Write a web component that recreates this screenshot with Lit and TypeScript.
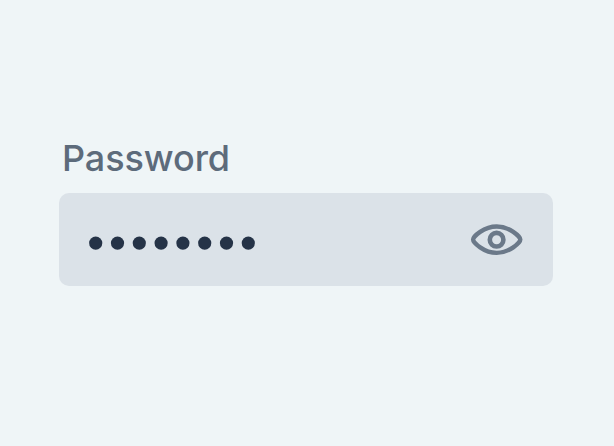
import { LitElement, html, svg, css } from "lit";

const dot = (i: number) => svg`<circle cx=${6.7 + i * 21.8} cy="7.1" r="6.6" />`;

class AppRoot extends LitElement {
  static styles = css`
    :host {
      display: block;
      box-sizing: border-box;
      width: 614px;
      height: 446px;
      padding: 134px 61px 0 59px;
      background: #eff5f7;
      font-family: Inter, sans-serif;
    }
    .label {
      display: block;
      height: 48px;
      padding-left: 3px;
      margin-bottom: 11px;
      line-height: 48px;
      font-size: 36px;
      font-weight: 450;
      letter-spacing: -0.08px;
      color: #5d6b7b;
    }
    .field {
      display: flex;
      align-items: center;
      justify-content: space-between;
      box-sizing: border-box;
      height: 93px;
      padding: 0 29px 0 30px;
      border-radius: 10px;
      background: #dbe2e8;
    }
    .dots {
      display: block;
      margin-top: 7px;
    }
    .eye {
      display: block;
    }
  `;

  render() {
    return html`
      <span class="label">Password</span>
      <div class="field">
        <svg class="dots" width="168" height="14" viewBox="0 0 168 14" fill="#253347">
          ${Array.from({ length: 8 }, (_, i) => dot(i))}
        </svg>
        <svg class="eye" width="54" height="34" viewBox="0 0 54 34" fill="none" stroke="#6b7989" stroke-width="4.4">
          <path d="M3.1 16.5C3.1 13.5 14 3.5 26.7 3.5S50.3 13.5 50.3 16.5S39.4 29.9 26.7 29.9S3.1 19.5 3.1 16.5Z" stroke-linejoin="round" />
          <circle cx="26.6" cy="16.7" r="6.8" stroke-width="4.6" />
        </svg>
      </div>
    `;
  }
}

customElements.define("app-root", AppRoot);
